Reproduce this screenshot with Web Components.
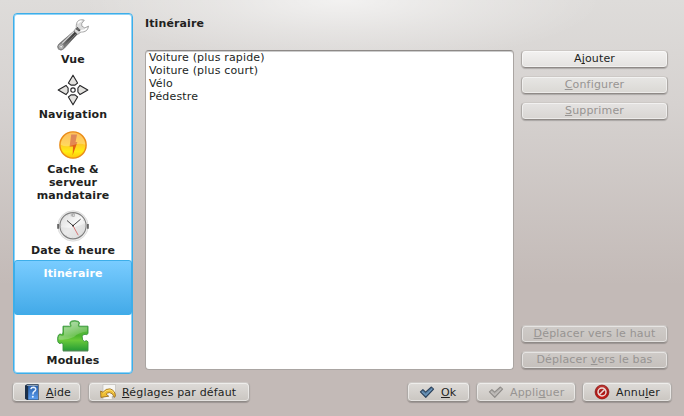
<!DOCTYPE html>
<html lang="fr">
<head>
<meta charset="utf-8">
<title>Configuration</title>
<style>
html,body{margin:0;height:100%;overflow:hidden}
body{font:11px/13px "DejaVu Sans",sans-serif;letter-spacing:.17px;color:#221f1e}
</style>
</head>
<body>
<settings-dialog>
  <page-list slot="nav">
    <page-item icon="wrench">Vue</page-item>
    <page-item icon="move">Navigation</page-item>
    <page-item icon="bolt">Cache &amp; serveur mandataire</page-item>
    <page-item icon="clock">Date &amp; heure</page-item>
    <page-item selected>Itinéraire</page-item>
    <page-item icon="puzzle">Modules</page-item>
  </page-list>
  <route-page slot="page" heading="Itinéraire">
    <list-row>Voiture (plus rapide)</list-row>
    <list-row>Voiture (plus court)</list-row>
    <list-row>Vélo</list-row>
    <list-row>Pédestre</list-row>
    <push-button slot="top" style="--face1:#f3f2f1;--face2:#e4e2e0">A<u>j</u>outer</push-button>
    <push-button slot="top" disabled style="--face1:#e7e6e4;--face2:#dad8d4"><u>C</u>onfigurer</push-button>
    <push-button slot="top" disabled style="--face1:#e5e3e2;--face2:#d8d5d2"><u>S</u>upprimer</push-button>
    <push-button slot="bottom" disabled style="--face1:#cfcbc8;--face2:#c7c2be"><u>D</u>éplacer vers le haut</push-button>
    <push-button slot="bottom" disabled style="--face1:#cfcbc8;--face2:#c5c0bc">Déplacer <u>v</u>ers le bas</push-button>
  </route-page>
  <push-button slot="left" icon="help" style="width:69px"><u>A</u>ide</push-button>
  <push-button slot="left" icon="undo" style="width:162px"><u>R</u>églages par défaut</push-button>
  <push-button slot="right" icon="check" style="width:63px"><u>O</u>k</push-button>
  <push-button slot="right" icon="check" disabled style="width:100px">Appli<u>q</u>uer</push-button>
  <push-button slot="right" icon="cancel" style="width:90px">Annu<u>l</u>er</push-button>
</settings-dialog>
<script>
const ICONS = {
wrench:`<svg viewBox="0 0 32 32"><defs><linearGradient id="w" x1="1" y1="0" x2="0" y2="1"><stop offset="0" stop-color="#2c2c2c"/><stop offset=".5" stop-color="#555"/><stop offset="1" stop-color="#a5a5a5"/></linearGradient></defs>
<path d="M18.2 11 21 14.4 7.4 29.2Q4 32.6 1.4 30.2-.6 27.6 1.8 25Z" fill="url(#w)" stroke="#777" stroke-width=".6"/>
<path d="M17 12.8 4.6 25" stroke="#d2d2d2" stroke-width="1.2"/><path d="M8.4 26.4 19 14.8" stroke="#8d8d8d" stroke-width=".8"/>
<circle cx="4.1" cy="27.7" r="2.9" fill="#c4c4c4" stroke="#777" stroke-width=".8"/><circle cx="4.1" cy="27.8" r="1.3" fill="#fff" stroke="#666" stroke-width=".5"/>
<path d="M27.3 1.2C24 0 20.2 1.2 19.6 4.6Q19 6.4 19.3 8.4L17 12 20.8 15.4 24 13C28 13.4 31.2 11.3 31.5 7.1L27.8 8.9 24.9 7.2 24.7 4.6Z" fill="#dcdcdc" stroke="#8a8a8a" stroke-width=".7"/>
<path d="M20.8 4.6Q21.8 2.2 24.6 2M23.2 11.8Q28 12 29.8 9.2" stroke="#fff" stroke-width="1.4" fill="none"/><path d="M20.4 8 23.6 10.9 22 12.6 18.8 10.2Z" fill="#343434"/><path d="m21.5 8.9-1.6 1.9m2.7-.9-1.7 1.8" stroke="#ddd" stroke-width=".6"/></svg>`,
move:`<svg viewBox="0 0 32 32"><g fill="#e3e2df" stroke="#29292b" stroke-width="1.15" stroke-linejoin="round"><path d="M16 1.2 20.6 9 18 11.1H14L11.4 9Z"/><path d="M16 30.8 20.6 23 18 20.9H14L11.4 23Z"/><path d="M1.2 16 9 11.4 11.1 14V18L9 20.6Z"/><path d="M30.8 16 23 11.4 20.9 14V18L23 20.6Z"/><circle cx="16" cy="16" r="2.2" fill="#fff"/></g></svg>`,
bolt:`<svg viewBox="0 0 32 32"><defs><linearGradient id="b" x1="0" y1="0" x2="0" y2="1"><stop offset="0" stop-color="#fda928"/><stop offset=".45" stop-color="#ffc62a"/><stop offset=".75" stop-color="#ffee12"/><stop offset="1" stop-color="#ffc40c"/></linearGradient><linearGradient id="bt" x1="0" y1="0" x2="0" y2="1"><stop offset="0" stop-color="#cf5f25"/><stop offset="1" stop-color="#ee6508"/></linearGradient></defs>
<circle cx="16" cy="16" r="14" fill="#f9edd8"/><circle cx="16" cy="16" r="13.1" fill="url(#b)" stroke="#ea8b17" stroke-width="1.4"/><path d="M14.2 5.6H20L18.6 13H20.4L15.6 26.4 16 17.6H12.6Z" fill="url(#bt)"/><path d="M3.8 15.8A12.2 12.2 0 0 1 28.2 15.8Q23 13.6 16 16.2 9 18.6 3.8 15.8Z" fill="#fff" opacity=".25"/></svg>`,
clock:`<svg viewBox="0 0 32 32"><defs><linearGradient id="c" x1="0" y1="0" x2="1" y2="1"><stop offset="0" stop-color="#d8d8d8"/><stop offset=".5" stop-color="#f8f8f8"/><stop offset="1" stop-color="#ddd"/></linearGradient></defs>
<circle cx="16" cy="16" r="15.2" fill="#eee" stroke="#d2d2d2" stroke-width=".7"/><path d="M1.1 14v4.8M30.9 14v4.8" stroke="#666" stroke-width="1.8"/><circle cx="16" cy="15.7" r="13.1" fill="url(#c)" stroke="#808080" stroke-width="1.2"/><circle cx="16" cy="15.7" r="11.7" fill="none" stroke="#c5c5c5" stroke-width=".6" stroke-dasharray="1 5.12"/><path d="M14.3 3.8v2.6m1.2-2.6h1.8v2.6h-1.8z" fill="none" stroke="#777" stroke-width=".5"/><path d="M3.5 17Q16 19.8 28.5 13 28.7 26 16 28.2 5.4 27.4 3.5 17Z" fill="#d1d1d1" opacity=".38"/><path d="M10 10.5 16 15.7 23.6 9.2" fill="none" stroke="#303030" stroke-width=".9"/><path d="M16 15.7 21.2 25.2" stroke="#d35b5b" stroke-width=".8"/><circle cx="16" cy="15.7" r=".9" fill="#222"/></svg>`,
puzzle:`<svg viewBox="0 0 32 32"><defs><linearGradient id="p" x1="0" y1="0" x2="0" y2="1"><stop offset="0" stop-color="#6fbf62"/><stop offset=".5" stop-color="#4cb52c"/><stop offset=".65" stop-color="#68c93a"/><stop offset="1" stop-color="#249c36"/></linearGradient><linearGradient id="ps" x1="0" y1="0" x2="1" y2="1"><stop offset="0" stop-color="#fff" stop-opacity=".55"/><stop offset=".5" stop-color="#fff" stop-opacity=".3"/><stop offset="1" stop-color="#fff" stop-opacity="0"/></linearGradient></defs>
<path d="M6 30.8V24.2Q4.8 22.2 3.6 23.4 1.8 24 .9 21.8 0 18 1.4 15.2 2.8 13.2 4.6 14.4 6 14.5 6 12V6.2H12.6Q14.4 5.8 13 4.2 12.4 1.8 14.8 1 18 .2 21.4 1.4 23.6 3 21.6 5 21.4 6.2 23 6.2H31V13.6Q29.5 15.2 28.4 14.4 26 13.6 25.2 16.6 25 20.8 27.3 21.4 29.8 19.8 31 21.8V30.8Z" fill="url(#p)" stroke="#33933a" stroke-width=".9"/><path d="M7 15V7.2H13.8Q15.3 5.7 14 3.4 14 1.8 17.7 1.8 21.8 1.8 21.2 3.7 20 5.8 21.8 7.2H30V11.6Q21 13 17 17 10 20.5 1.7 19.5 1.2 14.4 4 15.4 6.2 16 7 15Z" fill="url(#ps)"/><path d="M6 30.9h25" stroke="#4f7654" stroke-width=".7"/></svg>`,
help:`<svg viewBox="0 0 16 16"><defs><linearGradient id="h" x1="0" y1="0" x2="0" y2="1"><stop offset="0" stop-color="#275eaa"/><stop offset="1" stop-color="#5a9df0"/></linearGradient></defs><path d="M1 1.5 3 .3H14.6V16H3L1 14.8Z" fill="#1b2f49"/><path d="M4.2 1.6H14V15.6H4.2Z" fill="url(#h)"/><path d="M2.8 1.5H13.8" stroke="#bccbdb" stroke-width=".7"/><path d="M6.8 5.1Q7.2 3.2 9.4 3.2 12 3.4 11.7 5.7 11.4 7 10 7.7 8.9 8.4 8.9 10.5" fill="none" stroke="#e8f2ff" stroke-width="1.5"/><circle cx="8.8" cy="12.8" r="1" fill="#e8f2ff"/></svg>`,
undo:`<svg viewBox="0 0 16 16"><path d="M3 .5H15.5V12L11.8 15.5H3Z" fill="#f6f5f2" stroke="#bbb7b3" stroke-width=".6"/><path d="M15.3 12H11.8V15.3Z" fill="#bcb7ad"/><path d="M.6 7 3 8.3Q6.1 4.3 10.2 4.9 15.2 6.5 15.4 12L14.4 13.4Q12.7 8.8 9.6 8.6 7.3 8.6 6.2 10.2L8.7 12.2.9 13.4Z" fill="#eebd32" stroke="#936313" stroke-width=".8" stroke-linejoin="round"/><path d="M3.2 9.2Q6.5 5.4 10 5.9 12.7 6.5 13.9 9" stroke="#ffe375" stroke-width="1" fill="none"/></svg>`,
check:`<svg viewBox="0 0 16 16"><path d="M1.4 7.8 3.9 5.6 6.6 8.2 12.4 3 14.6 5.2 6.8 13.4Z" fill="var(--tick,#557fa5)" stroke="var(--tickline,#2c4159)" stroke-width="1.05" stroke-linejoin="round"/><path d="M2.9 7.7 6.7 11 13.2 4.8" fill="none" stroke="var(--tickshine,#82a6c5)" stroke-width=".8"/></svg>`,
cancel:`<svg viewBox="0 0 16 16"><defs><linearGradient id="x" x1="0" y1="0" x2="0" y2="1"><stop offset="0" stop-color="#c23c38"/><stop offset=".5" stop-color="#a51716"/><stop offset="1" stop-color="#d01e18"/></linearGradient></defs><circle cx="8" cy="8" r="6.9" fill="url(#x)" stroke="#8e1614" stroke-width=".8"/><circle cx="8" cy="8" r="4" fill="none" stroke="#ecdedb" stroke-width="1.5"/><path d="M5.2 10.8 10.8 5.2" stroke="#ecdedb" stroke-width="1.6"/></svg>`
};
function define(name, html, init){
  customElements.define(name, class extends HTMLElement{
    constructor(){ super(); this.attachShadow({mode:'open'}); }
    connectedCallback(){ this.shadowRoot.innerHTML = html; if(init) init(this, this.shadowRoot); }
  });
}
const setIcon = (el, root) => { root.querySelector('.icon').innerHTML = ICONS[el.getAttribute('icon')] || ''; };

define('settings-dialog', `<style>
:host{display:grid;grid-template:361px 21px / 120px 1fr;column-gap:12px;row-gap:8px;box-sizing:border-box;width:684px;height:416px;padding:13px 12px 0 13px;background:radial-gradient(ellipse 260px 64px at 50% 0,rgba(255,255,255,.62),rgba(255,255,255,.28) 50%,rgba(255,255,255,0)),linear-gradient(#dedcda,#d6d2d0 104px,#c3bab7 285px)}
footer{grid-column:1/-1;display:flex;justify-content:space-between;margin-left:-1px}
footer div{display:flex;gap:6px}
footer div:first-child{gap:7px}
</style><slot name="nav"></slot><slot name="page"></slot><footer><div><slot name="left"></slot></div><div><slot name="right"></slot></div></footer>`);

define('page-list', `<style>
:host{display:flex;flex-direction:column;box-sizing:border-box;background:#fff;border:1px solid #3daee9;border-radius:4px;box-shadow:inset 0 0 0 1px #8fd3f7;padding-top:1px;overflow:hidden}
</style><slot></slot>`);

define('page-item', `<style>
:host{display:flex;flex:none;flex-direction:column;align-items:center;box-sizing:border-box;padding:4px 12px;gap:2px;font-weight:bold;letter-spacing:.12px;text-align:center}
.icon{width:32px;height:32px}
.icon svg{display:block;width:32px;height:32px}
:host([selected]){height:55px;margin-top:-1px;margin-bottom:1px;padding-top:6px;color:#fff;border:1px solid #3daee9;border-radius:3px;background:linear-gradient(#79ccff,#43aae8)}
:host([selected]) .icon{display:none}
</style><div class="icon"></div><span><slot></slot></span>`, setIcon);

define('list-row', `<style>:host{display:block;height:13px;white-space:nowrap}</style><slot></slot>`);

define('route-page', `<style>
:host{display:grid;grid-template:36px 1fr / 369px 147px;column-gap:7px;row-gap:1px;height:357px}
h1{grid-column:1/-1;font:inherit;font-weight:bold;letter-spacing:.12px;margin:0;padding-top:4px}
.list{box-sizing:border-box;background:#fff;border:1px solid #aaa5a2;border-top:1px solid #8d8987;border-radius:4px;padding:0 3px;box-shadow:inset 0 1px #ccc}
.actions{display:flex;flex-direction:column;justify-content:space-between;padding-bottom:1px}
.actions div{display:flex;flex-direction:column;gap:8px}
</style><h1></h1><div class="list"><slot></slot></div><div class="actions"><div><slot name="top"></slot></div><div><slot name="bottom"></slot></div></div>`,
(el, root) => { root.querySelector('h1').textContent = el.getAttribute('heading'); });

define('push-button', `<style>
:host{display:flex;align-items:center;justify-content:center;box-sizing:border-box;height:18px;padding-bottom:1px;border:1px solid #aeaaa7;border-top-color:#cdc9c6;border-bottom-color:#8f8a87;border-radius:4.5px;background:linear-gradient(var(--face1,#dedbd8),var(--face2,#cac6c1));box-shadow:inset 0 0 0 1px rgba(255,255,255,.5),0 1px 1px rgba(0,0,0,.2);white-space:nowrap}
:host([icon]){height:20px;padding-bottom:0;justify-content:flex-start;padding-left:11px;gap:6px}
:host([disabled]){color:#979492;--tick:#b4b1ae;--tickline:#8e8b88;--tickshine:#cac7c4}
.icon{display:none;width:16px;height:16px;flex:none}
:host([icon]) .icon{display:block}
svg{display:block;width:16px;height:16px}
::slotted(u){text-decoration-thickness:1px;text-underline-offset:1px;text-decoration-skip-ink:none}
</style><div class="icon"></div><span><slot></slot></span>`, setIcon);
</script>
</body>
</html>
